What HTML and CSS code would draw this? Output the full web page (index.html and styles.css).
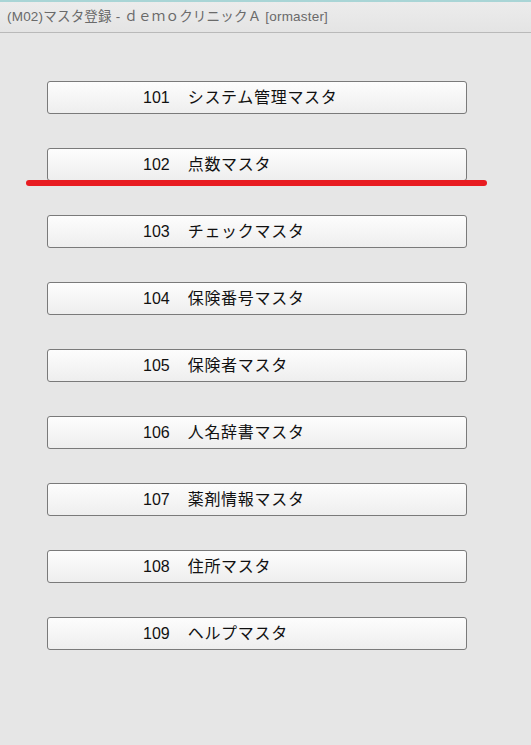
FILE: index.html
```html
<!DOCTYPE html>
<html lang="ja">

<head>
    <meta charset="UTF-8">
    <meta name="viewport" content="width=device-width, initial-scale=1.0">
    <title>(M02)マスタ登録</title>
    <link rel="stylesheet" href="styles.css">
</head>

<body>
    <div class="title-bar">(M02)マスタ登録 - ｄｅｍｏクリニックＡ [ormaster]</div>

    <div class="menu">
        <button class="menu-button">101　<span class="label">システム管理マスタ</span></button>
        <button class="menu-button">102　<span class="label">点数マスタ</span></button>
        <button class="menu-button">103　<span class="label">チェックマスタ</span></button>
        <button class="menu-button">104　<span class="label">保険番号マスタ</span></button>
        <button class="menu-button">105　<span class="label">保険者マスタ</span></button>
        <button class="menu-button">106　<span class="label">人名辞書マスタ</span></button>
        <button class="menu-button">107　<span class="label">薬剤情報マスタ</span></button>
        <button class="menu-button">108　<span class="label">住所マスタ</span></button>
        <button class="menu-button">109　<span class="label">ヘルプマスタ</span></button>
    </div>

    <!-- annotation -->
    <div class="mark-line"></div>
</body>

</html>
```

FILE: styles.css
```css
* {
    margin: 0;
    padding: 0;
    box-sizing: border-box;
}

body {
    background: #e6e6e6;
    font-family: 'Liberation Sans', 'Noto Sans CJK JP', sans-serif;
    height: 745px;
    position: relative;
    overflow: hidden;
}

.title-bar {
    height: 33px;
    border-top: 2px solid #a9d5d6;
    border-bottom: 1px solid #b9b9b9;
    background: linear-gradient(#ececec, #e4e4e4);
    color: #6a6a6a;
    font-size: 13.5px;
    line-height: 30px;
    padding-left: 7px;
    white-space: nowrap;
    letter-spacing: 0.2px;
}

.menu {
    display: flex;
    flex-direction: column;
    gap: 34px;
    padding: 48px 0 0 47px;
}

.menu-button {
    width: 420px;
    height: 33px;
    border: 1px solid #7a7a7a;
    border-radius: 3px;
    background: linear-gradient(#fdfdfd, #eeeeee);
    font-family: inherit;
    font-size: 16px;
    color: #111;
    text-align: left;
    padding-left: 95px;
    line-height: 31px;
}

.label {
    margin-left: 2px;
    letter-spacing: 0.7px;
}

.mark-line {
    position: absolute;
    top: 180px;
    left: 26px;
    width: 461px;
    height: 6px;
    border-radius: 3px;
    background: #e81c21;
}
```
